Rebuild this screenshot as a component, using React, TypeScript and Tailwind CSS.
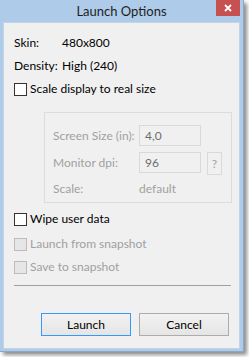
import React from "react";

function CheckBox({ label, disabled }: { label: string; disabled?: boolean }) {
  return (
    <div className="flex items-center h-[18px]">
      <div
        className={
          disabled
            ? "w-[13px] h-[13px] border border-[#bcbcbc] bg-[#e6e6e6]"
            : "w-[13px] h-[13px] border border-[#333333] bg-white"
        }
      />
      <span className={`ml-[3px] whitespace-nowrap ${disabled ? "text-[#a0a0a0]" : "text-black"}`}>{label}</span>
    </div>
  );
}

function TextBox({ value }: { value: string }) {
  return (
    <div className="w-[62px] h-[21px] border border-[#d9d9d9] bg-[#f0f0f0] flex items-center pl-[5px] text-[#6d6d6d]">
      {value}
    </div>
  );
}

export default function App() {
  return (
    <div
      className="w-[249px] h-[357px] bg-white overflow-hidden text-[12px] leading-[14px]"
      style={{ fontFamily: 'Lato, "Liberation Sans", Arial, sans-serif' }}
    >
      <div className="w-[244px] h-[352px] bg-[#aecbe9] border-r border-b border-[#8aa7c6] shadow-[3px_3px_4px_rgba(0,0,0,0.45)] flex flex-col">
        {/* title bar */}
        <div className="h-[22px] shrink-0 flex items-start relative">
          <div className="flex-1 text-center pt-[4px] text-[#1f1f1f] text-[13px]">Launch Options</div>
          <div className="absolute right-[3px] top-0 w-[24px] h-[16px] bg-[#c75050] flex items-center justify-center">
            <svg width="8" height="8" viewBox="0 0 8 8">
              <path d="M1 1L7 7M7 1L1 7" stroke="white" strokeWidth="1.8" />
            </svg>
          </div>
        </div>

        {/* client area */}
        <div className="flex-1 mx-[3px] mb-[2px] bg-[#f0f0f0] border border-[#c3d4e6] flex flex-col pl-[10px] pr-[10px]">
          <div className="mt-[11px] h-[18px] flex items-center">
            <span className="w-[48px]">Skin:</span>
            <span>480x800</span>
          </div>
          <div className="mt-[5px] h-[18px] flex items-center">
            <span className="w-[48px]">Density:</span>
            <span>High (240)</span>
          </div>
          <div className="mt-[5px]">
            <CheckBox label="Scale display to real size" />
          </div>

          {/* group box */}
          <div className="mt-[14px] ml-[30px] w-[188px] h-[91px] border border-[#dcdcdc] flex flex-col pl-[8px] pt-[12px]">
            <div className="flex items-center h-[21px]">
              <span className="w-[86px] whitespace-nowrap text-[#a0a0a0]">Screen Size (in):</span>
              <TextBox value="4,0" />
            </div>
            <div className="flex items-start mt-[6px] h-[23px]">
              <span className="w-[86px] h-[21px] whitespace-nowrap flex items-center text-[#a0a0a0]">Monitor dpi:</span>
              <TextBox value="96" />
              <div className="ml-[6px] w-[15px] h-[23px] border border-[#d9d9d9] flex items-center justify-center text-[#a0a0a0]">
                ?
              </div>
            </div>
            <div className="flex items-center h-[14px] mt-[7px]">
              <span className="w-[86px] text-[#a0a0a0]">Scale:</span>
              <span className="text-[#a0a0a0]">default</span>
            </div>
          </div>

          <div className="mt-[7px]">
            <CheckBox label="Wipe user data" />
          </div>
          <div className="mt-[7px]">
            <CheckBox label="Launch from snapshot" disabled />
          </div>
          <div className="mt-[5px]">
            <CheckBox label="Save to snapshot" disabled />
          </div>

          <div className="mt-[9px] h-px bg-[#a0a0a0] w-[217px]" />

          <div className="mt-[27px] flex justify-end gap-[8px]">
            <button className="w-[90px] h-[23px] border border-[#3399ff] bg-gradient-to-b from-[#f2f2f2] to-[#e5e5e5] text-black">
              Launch
            </button>
            <button className="w-[90px] h-[23px] border border-[#acacac] bg-gradient-to-b from-[#f2f2f2] to-[#e5e5e5] text-black">
              Cancel
            </button>
          </div>
        </div>
      </div>
    </div>
  );
}
